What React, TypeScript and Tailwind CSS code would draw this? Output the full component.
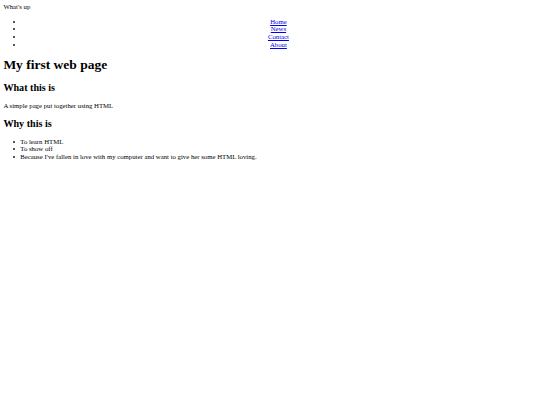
import React from 'react';

const navLinks = ['Home', 'News', 'Contact', 'About'];

const reasons = [
  'To learn HTML',
  'To show off',
  "Because I've fallen in love with my computer and want to give her some HTML loving.",
];

// disc marker drawn as a small circle left of the item text
const bullet =
  "relative before:content-[''] before:absolute before:left-[-7.6px] before:top-[3.1px] before:w-[2px] before:h-[2px] before:rounded-full before:bg-[#222]";

export default function App() {
  return (
    <div className="min-h-[405px] bg-white text-black font-['Liberation_Serif',serif] text-[6.75px] leading-[7.6px]">
      <div className="p-[3.375px]">
        <div>What's up</div>
        <ul className="my-[6.75px] pl-[16.875px] list-none">
          {navLinks.map((link) => (
            <li key={link} className={`${bullet} text-center`}>
              <a href="#" className="text-[#0000ee] underline">
                {link}
              </a>
            </li>
          ))}
        </ul>
        <h1 className="text-[13.5px] leading-[15.5px] font-bold my-[9.05px]">My first web page</h1>
        <h2 className="text-[10.125px] leading-[11.6px] font-bold my-[8.4px]">What this is</h2>
        <p className="my-[6.75px]">A simple page put together using HTML</p>
        <h2 className="text-[10.125px] leading-[11.6px] font-bold my-[8.4px]">Why this is</h2>
        <ul className="my-[6.75px] pl-[16.875px] list-none">
          {reasons.map((r) => (
            <li key={r} className={bullet}>
              {r}
            </li>
          ))}
        </ul>
      </div>
    </div>
  );
}
